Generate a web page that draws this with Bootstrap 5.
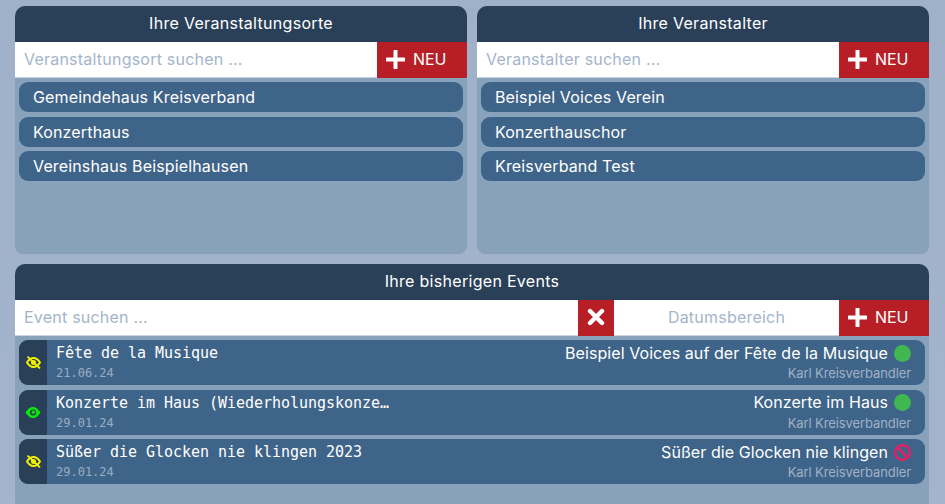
<!doctype html>
<html lang="de"><head><meta charset="utf-8"><title>Dashboard</title>
<link href="https://cdn.jsdelivr.net/npm/bootstrap@5.3.0/dist/css/bootstrap.min.css" rel="stylesheet">
<style>
html,body{height:504px;overflow:hidden}
body{background:linear-gradient(#9fb1c9,#a3b4cb);font-family:Inter,Roboto,"Liberation Sans",sans-serif;font-size:16px;letter-spacing:-.1px;padding:6px 16px 0 15px}
.board{display:grid;grid-template-columns:452px 452px;grid-template-rows:248px 240px;gap:10px;width:914px}
.wide{grid-column:1 / 3}
.panel{background:#89a2bc;border:0;border-radius:10px 10px 8px 8px;overflow:hidden}
.wide.panel{border-radius:10px 10px 0 0}
.panel .card-header{background:#2a3f58;color:#fff;border:0;border-radius:0;height:36px;padding:0;text-align:center;line-height:35px;font-size:16px;letter-spacing:.3px}
.searchbar{height:35px;flex-wrap:nowrap}
.searchbar>*{margin-left:0!important}
.searchbar .form-control{border:0;border-bottom:1px solid #c9d3df;border-radius:0!important;height:36px;padding:0 9px 2px;font-size:16px;letter-spacing:.22px;color:#333;box-shadow:none}
.searchbar .form-control::placeholder{color:#a4b5cb;opacity:1}
.datefield{flex:0 0 225px!important;width:225px!important;text-align:center}
.redbtn{background:#b81e26;color:#fff;border:0;border-radius:0!important;height:36px;padding:0 0 2px;display:flex;align-items:center;font-size:16px;letter-spacing:-.1px;flex:0 0 auto}
.redbtn:hover{background:#b81e26;color:#fff}
.newbtn{width:90px;padding-left:9px;gap:8px}
.clearbtn{width:36px;justify-content:center}
.entries{padding:5px 4px 0;display:flex;flex-direction:column;gap:4.7px}
.place{background:#3f6489;color:#fff;border-radius:9px;height:30px;line-height:30px;padding:0 14px;font-size:16px;letter-spacing:.15px}
.evlist{gap:4.5px}
.evrow{background:#3f6489;border-radius:9px;height:45px;overflow:hidden;display:flex;color:#fff}
.evstate{background:#2a3f58;width:28px;flex:0 0 28px;display:flex;align-items:center;justify-content:center}
.evbody{flex:1;min-width:0;padding:2px 14px 0 9px;display:flex;justify-content:space-between}
.evleft{min-width:0}
.evtitle{font-family:"DejaVu Sans Mono",monospace;font-size:15px;letter-spacing:-.03px;line-height:22px;white-space:nowrap}
.evdate{font-family:"DejaVu Sans Mono",monospace;font-size:12px;letter-spacing:0;line-height:18px;color:#9aacc3}
.evright{text-align:right}
.evname{display:flex;align-items:center;justify-content:flex-end;gap:6px;line-height:20px;height:22px;padding-bottom:1px;white-space:nowrap;letter-spacing:.07px}
.evname>.dot,.evname>svg{margin-top:1px}
.evowner{font-size:13px;line-height:18px;color:#a0b1c7}
.dot{width:17px;height:17px;border-radius:50%;background:#40b750;flex:0 0 17px}
</style></head>
<body>
<main class="board">
<section class="card panel">
  <div class="card-header">Ihre Veranstaltungsorte</div>
  <div class="input-group searchbar">
    <input class="form-control" placeholder="Veranstaltungsort suchen ...">
    <button class="btn redbtn newbtn"><svg width="19" height="19" viewBox="0 0 19 19"><path d="M9.500 1v17M1 9.500h17" stroke="#fff" stroke-width="4" stroke-linecap="round"/></svg>NEU</button>
  </div>
  <div class="entries">
    <div class="place">Gemeindehaus Kreisverband</div>
    <div class="place">Konzerthaus</div>
    <div class="place">Vereinshaus Beispielhausen</div>
  </div>
</section>
<section class="card panel">
  <div class="card-header">Ihre Veranstalter</div>
  <div class="input-group searchbar">
    <input class="form-control" placeholder="Veranstalter suchen ...">
    <button class="btn redbtn newbtn"><svg width="19" height="19" viewBox="0 0 19 19"><path d="M9.500 1v17M1 9.500h17" stroke="#fff" stroke-width="4" stroke-linecap="round"/></svg>NEU</button>
  </div>
  <div class="entries">
    <div class="place">Beispiel Voices Verein</div>
    <div class="place">Konzerthauschor</div>
    <div class="place">Kreisverband Test</div>
  </div>
</section>
<section class="card panel wide">
  <div class="card-header">Ihre bisherigen Events</div>
  <div class="input-group searchbar">
    <input class="form-control" placeholder="Event suchen ...">
    <button class="btn redbtn clearbtn"><svg width="18" height="18" viewBox="0 0 18 18"><path d="M3 3l12 12M15 3L3 15" stroke="#fff" stroke-width="4.400" stroke-linecap="round"/></svg></button>
    <input class="form-control datefield" placeholder="Datumsbereich">
    <button class="btn redbtn newbtn"><svg width="19" height="19" viewBox="0 0 19 19"><path d="M9.500 1v17M1 9.500h17" stroke="#fff" stroke-width="4" stroke-linecap="round"/></svg>NEU</button>
  </div>
  <div class="entries evlist">
    <div class="evrow">
      <div class="evstate"><svg width="15" height="13" viewBox="0 0 15 13" fill="none" stroke="#f2f200"><path d="M1 6.500C3 3.300 5 2 7.500 2S12 3.300 14 6.500C12 9.700 10 11 7.500 11S3 9.700 1 6.500Z" stroke-width="2"/><circle cx="7.500" cy="6.500" r="1.600" stroke-width="1.800"/><path d="M1.500 .6l12.500 11.800" stroke-width="1.800"/></svg></div>
      <div class="evbody">
        <div class="evleft"><div class="evtitle">Fête de la Musique</div><div class="evdate">21.06.24</div></div>
        <div class="evright"><div class="evname">Beispiel Voices auf der Fête de la Musique <span class="dot"></span></div><div class="evowner">Karl Kreisverbandler</div></div>
      </div>
    </div>
    <div class="evrow">
      <div class="evstate"><svg width="16" height="13" viewBox="0 0 15 12" fill="none"><path d="M.5 6C3 2.100 5 .8 7.500 .8S12 2.100 14.500 6C12 9.900 10 11.200 7.500 11.200S3 9.900 .5 6Z" fill="#0be80b"/><circle cx="7.500" cy="6" r="2.900" fill="#2a3f58"/><circle cx="7.800" cy="5.700" r="1.500" fill="#0be80b"/></svg></div>
      <div class="evbody">
        <div class="evleft"><div class="evtitle">Konzerte im Haus (Wiederholungskonze…</div><div class="evdate">29.01.24</div></div>
        <div class="evright"><div class="evname">Konzerte im Haus <span class="dot"></span></div><div class="evowner">Karl Kreisverbandler</div></div>
      </div>
    </div>
    <div class="evrow">
      <div class="evstate"><svg width="15" height="13" viewBox="0 0 15 13" fill="none" stroke="#f2f200"><path d="M1 6.500C3 3.300 5 2 7.500 2S12 3.300 14 6.500C12 9.700 10 11 7.500 11S3 9.700 1 6.500Z" stroke-width="2"/><circle cx="7.500" cy="6.500" r="1.600" stroke-width="1.800"/><path d="M1.500 .6l12.500 11.800" stroke-width="1.800"/></svg></div>
      <div class="evbody">
        <div class="evleft"><div class="evtitle">Süßer die Glocken nie klingen 2023</div><div class="evdate">29.01.24</div></div>
        <div class="evright"><div class="evname">Süßer die Glocken nie klingen <svg width="17" height="17" viewBox="0 0 17 17" fill="none" stroke="#ee1a62" stroke-width="2.200"><circle cx="8.500" cy="8.500" r="7.300"/><path d="M3.400 3.400l10.200 10.200"/></svg></div><div class="evowner">Karl Kreisverbandler</div></div>
      </div>
    </div>
  </div>
</section>
</main>
<script src="https://cdn.jsdelivr.net/npm/bootstrap@5.3.0/dist/js/bootstrap.bundle.min.js"></script>
</body></html>
